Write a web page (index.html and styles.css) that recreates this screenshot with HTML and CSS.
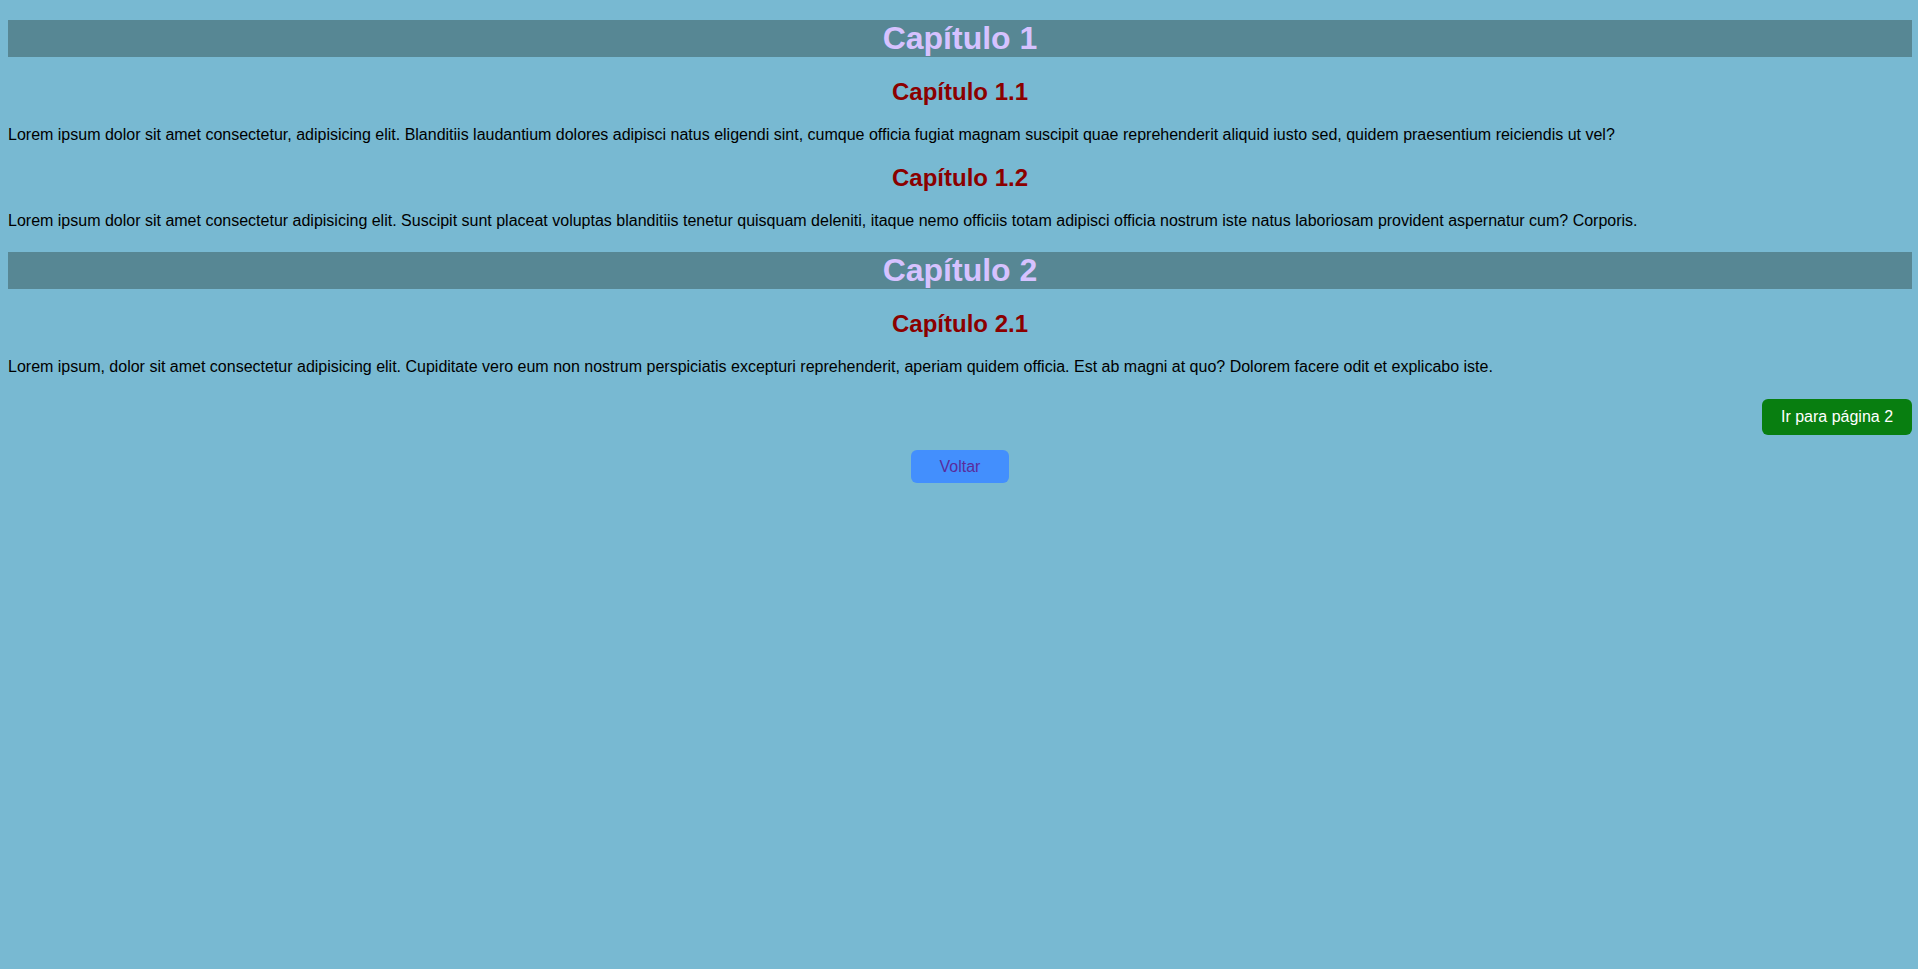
FILE: index.html
```html
<!DOCTYPE html>
<html lang="pt-BR">
<head>
<meta charset="utf-8">
<title>Capítulos</title>
<link rel="stylesheet" href="styles.css">
</head>
<body>
  <h1 class="chapter">Capítulo 1</h1>
  <h2 class="section">Capítulo 1.1</h2>
  <p class="text">Lorem ipsum dolor sit amet consectetur, adipisicing elit. Blanditiis laudantium dolores adipisci natus eligendi sint, cumque officia fugiat magnam suscipit quae reprehenderit aliquid iusto sed, quidem praesentium reiciendis ut vel?</p>
  <h2 class="section">Capítulo 1.2</h2>
  <p class="text">Lorem ipsum dolor sit amet consectetur adipisicing elit. Suscipit sunt placeat voluptas blanditiis tenetur quisquam deleniti, itaque nemo officiis totam adipisci officia nostrum iste natus laboriosam provident aspernatur cum? Corporis.</p>
  <h1 class="chapter">Capítulo 2</h1>
  <h2 class="section">Capítulo 2.1</h2>
  <p class="text">Lorem ipsum, dolor sit amet consectetur adipisicing elit. Cupiditate vero eum non nostrum perspiciatis excepturi reprehenderit, aperiam quidem officia. Est ab magni at quo? Dolorem facere odit et explicabo iste.</p>
  <div class="next-row">
    <a class="btn-next" href="#">Ir para página 2</a>
  </div>
  <div class="back-row">
    <a class="btn-back" href="#">Voltar</a>
  </div>
</body>
</html>
```
FILE: styles.css
```css
html {
  background: #78b9d2;
}
body {
  margin: 0 6px 8px 8px;
  padding-top: 20px;
  background: #78b9d2;
  font-family: "Liberation Sans", Arial, sans-serif;
  font-size: 16px;
  color: #000;
}
.chapter {
  margin: 0.67em 0;
  background: #578794;
  color: #d6c2ff;
  text-align: center;
  font-size: 32px;
  font-weight: bold;
  line-height: normal;
}
.chapter:first-child {
  margin-top: 0;
}
.section {
  margin: 0.83em 0;
  color: #8b0000;
  text-align: center;
  font-size: 24px;
  line-height: normal;
}
.text {
  margin: 16px 0;
  line-height: normal;
}
.next-row {
  display: flex;
  justify-content: flex-end;
  margin-top: 23px;
}
.btn-next {
  display: block;
  width: 150px;
  height: 36px;
  line-height: 36px;
  text-align: center;
  background: #087e10;
  color: #fff;
  text-decoration: none;
  border-radius: 6px;
  font-size: 16px;
}
.back-row {
  display: flex;
  justify-content: center;
  margin-top: 15px;
}
.btn-back {
  display: block;
  width: 98px;
  height: 33px;
  line-height: 33px;
  text-align: center;
  background: #438ffd;
  color: #5a2c9c;
  text-decoration: none;
  border-radius: 6px;
  font-size: 16px;
}
```
